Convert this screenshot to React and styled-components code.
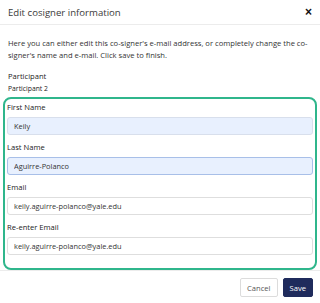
import styled, { createGlobalStyle } from "styled-components";

const Global = createGlobalStyle`
  html, body {
    margin: 0;
    padding: 0;
    background: #fff;
  }
  body {
    font-family: "Open Sans", "Noto Sans", sans-serif;
    color: #333;
  }
  * { box-sizing: border-box; }
`;

const Modal = styled.div`
  width: 320px;
  height: 303px;
  display: flex;
  flex-direction: column;
  background: #fff;
`;

const Header = styled.div`
  height: 32px;
  display: flex;
  align-items: center;
  justify-content: space-between;
  padding: 0 8px;
  border-bottom: 1px solid #ececec;
`;

const Title = styled.h2`
  margin: 0;
  font-size: 9.6px;
  font-weight: 400;
  color: #3a3a3a;
`;

const Close = styled.button`
  border: 0;
  background: none;
  padding: 0;
  font-size: 12px;
  font-weight: 700;
  color: #111;
  line-height: 1;
`;

const Body = styled.div`
  padding: 12px 3px 0;
`;

const Intro = styled.p`
  margin: 0 5px 10px;
  font-size: 7.6px;
  line-height: 12px;
  color: #333;
`;

const Field = styled.div`
  display: flex;
  flex-direction: column;
  gap: ${(p) => p.$gap || 4}px;
  margin: ${(p) => p.$margin || "0"};
`;

const Label = styled.label`
  font-size: 7.6px;
  line-height: 11px;
  color: #222;
`;

const Static = styled.span`
  font-size: 6.8px;
  line-height: 10px;
  color: #222;
`;

const Group = styled.div`
  border: 2px solid #2fb68c;
  border-radius: 8px;
  padding: 3px 2px 13px;
  display: flex;
  flex-direction: column;
  gap: 7px;
`;

const Input = styled.input`
  height: 18px;
  width: 100%;
  padding: 0 6px;
  font-family: inherit;
  font-size: 7.4px;
  color: #333;
  border-radius: 3px;
  border: 1px solid ${(p) => (p.$focus ? "#a8bfe8" : p.$filled ? "#d8dfec" : "#dedede")};
  background: ${(p) => (p.$filled ? "#e8f0fe" : "#fff")};
  outline: none;
`;

const Footer = styled.div`
  margin-top: auto;
  display: flex;
  justify-content: flex-end;
  gap: 5px;
  padding: 7px 7px 6px;
  border-top: 1px solid #ececec;
`;

const Button = styled.button`
  height: 19px;
  padding: 0 6px;
  font-family: inherit;
  font-size: 7.6px;
  border-radius: 2px;
  border: 1px solid ${(p) => (p.$primary ? "#1f2b5c" : "#dcdcdc")};
  background: ${(p) => (p.$primary ? "#1f2b5c" : "#fff")};
  color: ${(p) => (p.$primary ? "#fff" : "#555")};
`;

export default function App() {
  return (
    <Modal>
      <Global />
      <Header>
        <Title>Edit cosigner information</Title>
        <Close aria-label="Close">×</Close>
      </Header>
      <Body>
        <Intro>
          Here you can either edit this co-signer's e-mail address, or completely change the co-signer's name and
          e-mail. Click save to finish.
        </Intro>
        <Field $gap={2} $margin="0 5px 3px">
          <Label>Participant</Label>
          <Static>Participant 2</Static>
        </Field>
        <Group>
          <Field>
            <Label>First Name</Label>
            <Input $filled defaultValue="Keily" />
          </Field>
          <Field>
            <Label>Last Name</Label>
            <Input $filled $focus defaultValue="Aguirre-Polanco" />
          </Field>
          <Field>
            <Label>Email</Label>
            <Input defaultValue="keily.aguirre-polanco@yale.edu" />
          </Field>
          <Field>
            <Label>Re-enter Email</Label>
            <Input defaultValue="keily.aguirre-polanco@yale.edu" />
          </Field>
        </Group>
      </Body>
      <Footer>
        <Button>Cancel</Button>
        <Button $primary>Save</Button>
      </Footer>
    </Modal>
  );
}
